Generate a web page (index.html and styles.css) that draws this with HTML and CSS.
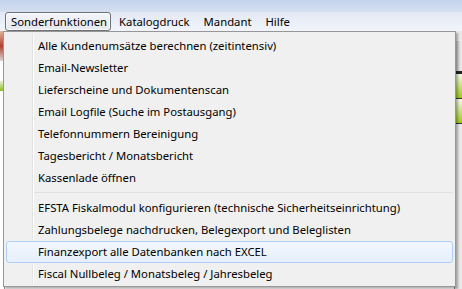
FILE: index.html
```html
<!DOCTYPE html>
<html lang="de">
<head>
  <meta charset="UTF-8" />
  <title>Sonderfunktionen</title>
  <link rel="stylesheet" href="styles.css">
</head>
<body>
  <div class="titlebar"></div>

  <!-- Menu bar -->
  <nav class="menubar">
    <span class="menu-item open">Sonderfunktionen</span>
    <span class="menu-item">Katalogdruck</span>
    <span class="menu-item">Mandant</span>
    <span class="menu-item">Hilfe</span>
  </nav>

  <!-- Window content behind the menu -->
  <div class="content">
    <div class="left-strip">
      <div class="thumb"></div>
      <div class="green"></div>
    </div>
    <div class="center"></div>
    <div class="right-strip">
      <div class="dark"></div>
      <div class="lime"></div>
      <div class="lime"></div>
    </div>
  </div>

  <!-- Dropdown -->
  <div class="dropdown">
    <ul>
      <li>Alle Kundenumsätze berechnen (zeitintensiv)</li>
      <li>Email-Newsletter</li>
      <li>Lieferscheine und Dokumentenscan</li>
      <li>Email Logfile (Suche im Postausgang)</li>
      <li>Telefonnummern Bereinigung</li>
      <li>Tagesbericht / Monatsbericht</li>
      <li>Kassenlade öffnen</li>
      <li class="separator"></li>
      <li>EFSTA Fiskalmodul konfigurieren (technische Sicherheitseinrichtung)</li>
      <li>Zahlungsbelege nachdrucken, Belegexport und Beleglisten</li>
      <li class="hover">Finanzexport alle Datenbanken nach EXCEL</li>
      <li>Fiscal Nullbeleg / Monatsbeleg / Jahresbeleg</li>
    </ul>
  </div>
</body>
</html>
```

FILE: styles.css
```css
body {
  margin: 0;
  width: 462px;
  height: 289px;
  overflow: hidden;
  font-family: "Noto Sans", "Open Sans", sans-serif;
  font-size: 11.3px;
  color: #000;
  background: #fff;
  position: relative;
}

.titlebar {
  height: 12px;
  background: linear-gradient(to bottom, #c4d3ec, #d6dff1);
}

/* Menu bar */
.menubar {
  height: 19px;
  display: flex;
  align-items: center;
  padding-left: 5px;
  background: linear-gradient(to bottom, #e3e9f5, #f1f4fa);
}

.menu-item {
  padding: 1px 5px 0 5px;
  margin-right: 2px;
  line-height: 16px;
  border: 1px solid transparent;
}

.menu-item.open {
  padding-right: 3px;
  border: 1px solid #6f7177;
  border-radius: 3px;
  background: linear-gradient(to bottom, #f3f5f9, #e4e8ef);
  box-shadow: inset 0 0 0 1px rgba(255,255,255,0.7);
}

/* Background window content */
.content {
  display: flex;
  height: 258px;
}

.left-strip {
  width: 4px;
  background: #fff;
  border-right: 1px solid #999;
}

.thumb {
  height: 30px;
  background: linear-gradient(to bottom, #e0b8a0, #b04030, #d8d8d8);
}

.green {
  height: 10px;
  margin-top: 20px;
  background: linear-gradient(to bottom, #e8f0d0, #8cbc20);
}

.center {
  flex: 1;
}

.right-strip {
  width: 7px;
  background: #e8e8e8;
  border-left: 1px solid #888;
}

.dark {
  height: 30px;
  margin-top: 10px;
  background: linear-gradient(to right, #bbb, #eee);
  border-bottom: 3px solid #222;
}

.lime {
  height: 24px;
  border-bottom: 1px solid #333;
  background: linear-gradient(to bottom, #f4f8e8, #9cc820);
}

/* Dropdown menu */
.dropdown {
  position: absolute;
  left: 3px;
  top: 31px;
  width: 451px;
  height: 254px;
  background: #f0f0f0;
  border: 1px solid #979797;
  box-shadow: 2px 2px 2px rgba(0, 0, 0, 0.3);
}

.dropdown::before {
  content: "";
  position: absolute;
  left: 28px;
  top: 2px;
  bottom: 2px;
  border-left: 1px solid #e2e3e3;
  border-right: 1px solid #fff;
}

.dropdown ul {
  list-style: none;
  margin: 0;
  padding: 3px 2px 0 2px;
}

.dropdown li {
  height: 20px;
  line-height: 20px;
  padding-left: 31px;
  border: 1px solid transparent;
  border-radius: 3px;
  position: relative;
}

.dropdown li.separator {
  height: 3px;
  margin: 0 0 4px 28px;
  padding: 0;
  border: none;
  border-bottom: 1px solid #e0e0e0;
  border-radius: 0;
}

.dropdown li.hover {
  border-color: #aecff7;
  background: linear-gradient(to bottom, #f2f7fe, #e5effb);
}
```
